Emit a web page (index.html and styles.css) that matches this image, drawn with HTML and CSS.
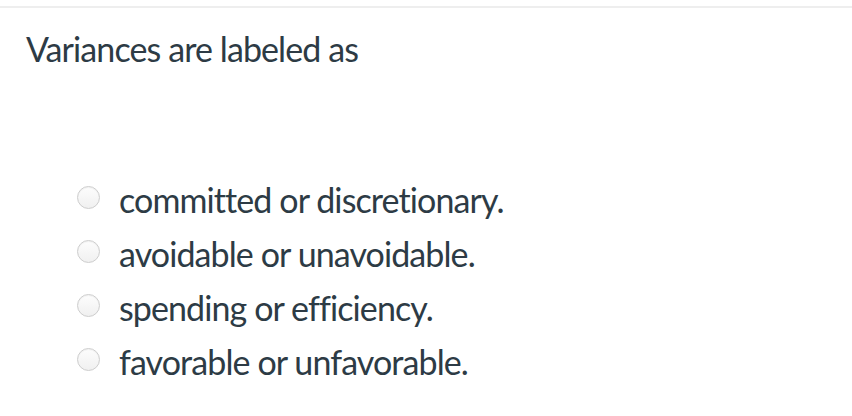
FILE: index.html
```html
<!DOCTYPE html>
<html>
<head>
<meta charset="utf-8">
<link rel="stylesheet" href="styles.css">
</head>
<body>
<div class="question">
  <div class="rule"></div>
  <div class="prompt">Variances are labeled as</div>
  <ul class="answers">
    <li class="answer"><span class="radio"></span><span class="label">committed or discretionary.</span></li>
    <li class="answer"><span class="radio"></span><span class="label">avoidable or unavoidable.</span></li>
    <li class="answer"><span class="radio"></span><span class="label">spending or efficiency.</span></li>
    <li class="answer"><span class="radio"></span><span class="label">favorable or unfavorable.</span></li>
  </ul>
</div>
</body>
</html>
```
FILE: styles.css
```css
html, body {
  margin: 0;
  padding: 0;
  background: #fff;
}
body {
  font-family: Lato, "Open Sans", sans-serif;
  color: #2d3b45;
}
.question {
  padding-top: 6px;
}
.rule {
  height: 2px;
  background: #eeeeee;
}
.prompt {
  font-size: 34px;
  line-height: 44px;
  letter-spacing: -0.9px;
  padding: 19px 0 0 26px;
}
.answers {
  list-style: none;
  margin: 0;
  padding: 109px 0 0 77px;
  display: flex;
  flex-direction: column;
  gap: 14px;
}
.answer {
  display: flex;
  align-items: center;
  gap: 19px;
  height: 40px;
}
.radio {
  width: 21px;
  height: 21px;
  margin-bottom: 6px;
  border-radius: 50%;
  border: 1px solid #cdcdcd;
  background: linear-gradient(#fdfdfd, #f0f0f0);
  box-shadow: inset 0 1px 1px rgba(0,0,0,0.05);
  flex: none;
}
.label {
  font-size: 34px;
  line-height: 40px;
  letter-spacing: -0.9px;
}
```
